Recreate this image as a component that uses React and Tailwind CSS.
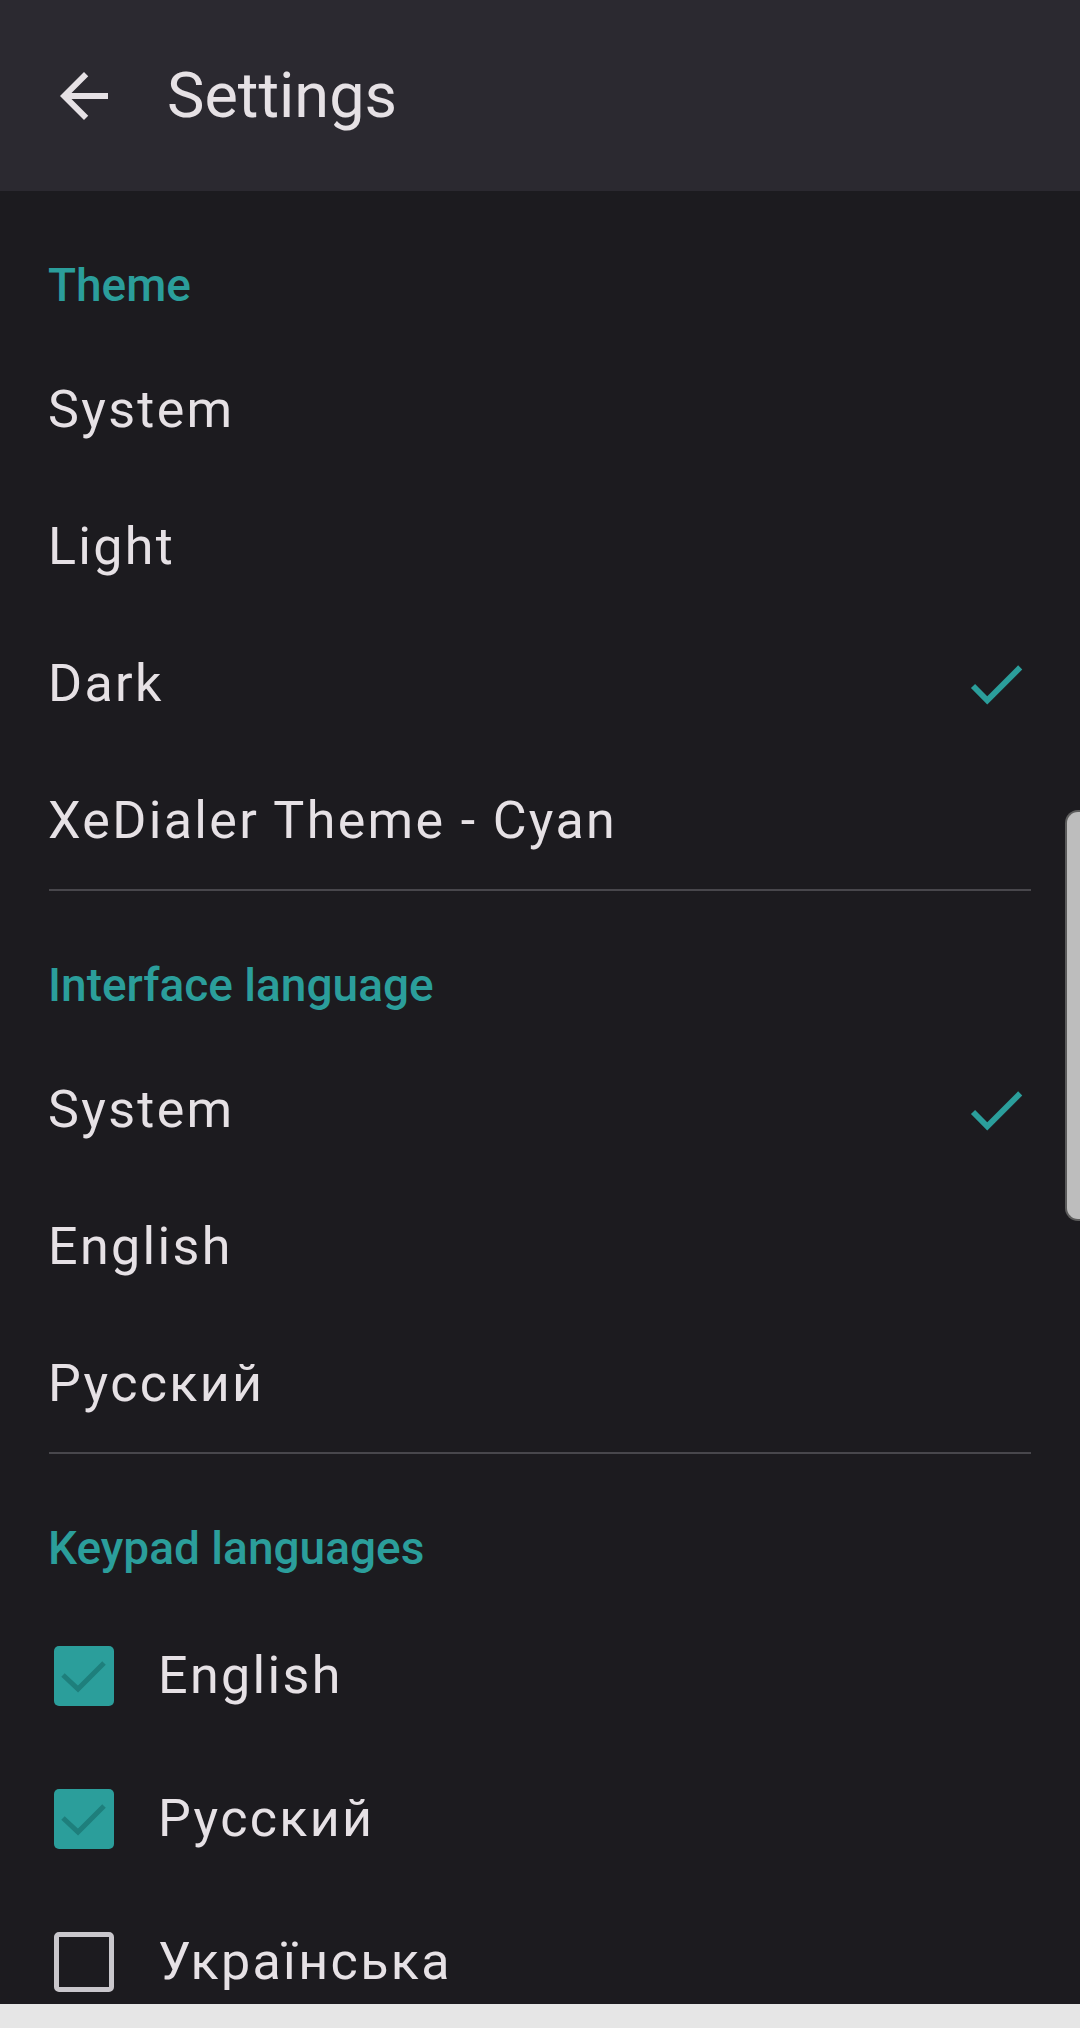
import { useState } from 'react'

const TEAL = '#2b9e9b'

function BackArrow() {
  return (
    <svg width="72" height="72" viewBox="0 0 24 24" className="shrink-0">
      <path
        fill="#e6e1e5"
        d="M20 11H7.83l5.59-5.59L12 4l-8 8 8 8 1.41-1.41L7.83 13H20v-2z"
      />
    </svg>
  )
}

function Check() {
  return (
    <svg width="70" height="70" viewBox="0 0 24 24" className="shrink-0">
      <path fill={TEAL} d="M9 16.17L4.83 12l-1.42 1.41L9 19 21 7l-1.41-1.41z" />
    </svg>
  )
}

function Checkbox({ checked }) {
  if (!checked) {
    return (
      <div className="w-[60px] h-[60px] shrink-0 rounded-[5px] border-[5px] border-[#c9c7cc]" />
    )
  }
  return (
    <div className="w-[60px] h-[60px] shrink-0 rounded-[5px] bg-[#2b9e9b]">
      <svg width="60" height="60" viewBox="0 0 60 60">
        <polyline
          points="9,29 24,43 50,17"
          fill="none"
          stroke="#1e7f7c"
          strokeWidth="5"
        />
      </svg>
    </div>
  )
}

function SectionTitle({ children }) {
  return (
    <div className="pt-[71px] pb-[33px] pl-[48px] text-[46px] leading-[46px] font-medium text-[#2b9e9b]">
      {children}
    </div>
  )
}

function OptionRow({ label, selected }) {
  return (
    <div className="h-[137px] flex items-center justify-between pl-[48px] pr-[49px]">
      <span className="text-[52px] leading-[52px] tracking-[0.045em] text-[#e6e1e5]">{label}</span>
      {selected && <Check />}
    </div>
  )
}

function CheckRow({ label, checked }) {
  return (
    <div className="h-[143px] flex items-center pl-[54px]">
      <Checkbox checked={checked} />
      <span className="ml-[44px] text-[52px] leading-[52px] tracking-[0.045em] text-[#e6e1e5]">
        {label}
      </span>
    </div>
  )
}

function Divider() {
  return <div className="mx-[49px] h-[2px] bg-[#48474c]" />
}

export default function App() {
  const [theme] = useState('Dark')
  const [lang] = useState('System')
  const keypad = { English: true, 'Русский': true, 'Українська': false }

  return (
    <div className="w-[1080px] h-[2028px] flex flex-col overflow-hidden bg-[#1c1b1f] font-['Roboto',sans-serif]">
      {/* Toolbar */}
      <header className="h-[191px] shrink-0 bg-[#2b2930] flex items-center pl-[48px]">
        <BackArrow />
        <span className="ml-[47px] text-[63px] leading-[63px] text-[#e6e1e5]">Settings</span>
      </header>

      {/* Preferences list */}
      <main className="flex-1 relative overflow-hidden">
        <SectionTitle>Theme</SectionTitle>
        {['System', 'Light', 'Dark', 'XeDialer Theme - Cyan'].map((t) => (
          <OptionRow key={t} label={t} selected={t === theme} />
        ))}
        <Divider />

        <SectionTitle>Interface language</SectionTitle>
        {['System', 'English', 'Русский'].map((l) => (
          <OptionRow key={l} label={l} selected={l === lang} />
        ))}
        <Divider />

        <SectionTitle>Keypad languages</SectionTitle>
        {Object.entries(keypad).map(([name, on]) => (
          <CheckRow key={name} label={name} checked={on} />
        ))}

        {/* fast-scroll thumb */}
        <div className="absolute right-0 top-[619px] w-[15px] h-[411px] rounded-l-[13px] border-2 border-r-0 border-[#5c5c5c] bg-[#bdbdbd]" />
      </main>

      <div className="h-[24px] shrink-0 bg-[#e6e6e6]" />
    </div>
  )
}
